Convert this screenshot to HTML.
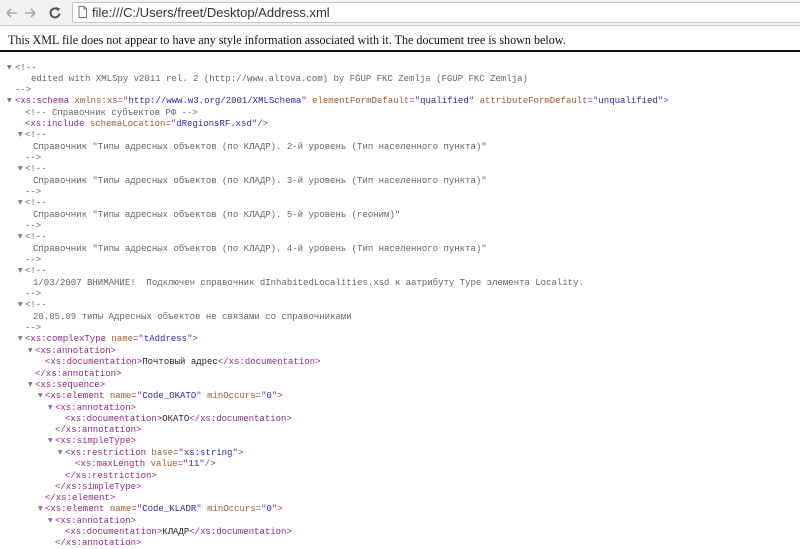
<!DOCTYPE html>
<html><head><meta charset="utf-8"><style>
body{margin:0;width:800px;height:542px;overflow:hidden;background:#fff;position:relative;font-family:"Liberation Sans",sans-serif}
.bar{position:absolute;left:0;top:0;width:800px;height:25px;background:#f1f1f1;border-bottom:1px solid #c8c8c8}
.addr{position:absolute;left:72px;top:2px;width:730px;height:19px;background:#fff;border:1px solid #c6c6c6;border-radius:2px}
.addr span{position:absolute;left:19px;top:2px;font-size:13px;color:#333}
.banner{position:absolute;left:8px;top:33px;font-family:"Liberation Serif",serif;font-size:12.1px;color:#111}
.rule{position:absolute;left:0;top:50px;width:800px;height:2px;background:#111}
.l{position:absolute;font-family:"Liberation Mono","DejaVu Sans Mono",monospace;font-size:9px;line-height:11px;white-space:pre;color:#8a2b85}
.t{position:absolute;font-size:6px;color:#777;font-family:"DejaVu Sans",sans-serif}
.c{color:#5d6a5d}.a{color:#a05a2a}.v{color:#2a2aa0}.x{color:#222}
</style></head><body>
<div class="bar">
<svg style="position:absolute;left:5px;top:6px" width="60" height="14" viewBox="0 0 60 14">
<path d="M2 7h10M2 7l4-4M2 7l4 4" stroke="#aaa" stroke-width="1.6" fill="none"/>
<path d="M20 7h10M30 7l-4-4M30 7l-4 4" stroke="#aaa" stroke-width="1.6" fill="none"/>
<path d="M53 3.5a4.5 4.5 0 1 0 1.5 4" stroke="#555" stroke-width="2" fill="none"/><path d="M51 1l4 1.5-2 3z" fill="#555"/>
</svg>
<div class="addr"><svg style="position:absolute;left:5px;top:3px" width="9" height="12"><path d="M1 .5h5l2.5 2.5v8.5h-7.5z M6 .5v2.5h2.5" stroke="#777" fill="none"/></svg><span>file:///C:/Users/freet/Desktop/Address.xml</span></div>
</div>
<div class="banner">This XML file does not appear to have any style information associated with it. The document tree is shown below.</div>
<div class="rule"></div>

<span class="t" style="left:7px;top:64px">▼</span><div class="l c" style="left:15px;top:63px">&lt;!--</div>
<div class="l c" style="left:31px;top:74px">edited with XMLSpy v2011 rel. 2 (http://www.altova.com) by FGUP FKC Zemlja (FGUP FKC Zemlja)</div>
<div class="l c" style="left:15px;top:85px">--&gt;</div>
<span class="t" style="left:7px;top:97px">▼</span><div class="l" style="left:15px;top:96px">&lt;xs:schema <span class="a">xmlns:xs</span>="<span class="v">http://www.w3.org/2001/XMLSchema</span>" <span class="a">elementFormDefault</span>="<span class="v">qualified</span>" <span class="a">attributeFormDefault</span>="<span class="v">unqualified</span>"&gt;</div>
<div class="l c" style="left:25px;top:108px">&lt;!-- Справочник субъектов РФ --&gt;</div>
<div class="l" style="left:25px;top:119px">&lt;xs:include <span class="a">schemaLocation</span>="<span class="v">dRegionsRF.xsd</span>"/&gt;</div>

<span class="t" style="left:18px;top:131px">▼</span><div class="l c" style="left:25px;top:130px">&lt;!--</div>
<div class="l c" style="left:33px;top:142px">Справочник "Типы адресных объектов (по КЛАДР). 2-й уровень (Тип населенного пункта)"</div>
<div class="l c" style="left:25px;top:153px">--&gt;</div>
<span class="t" style="left:18px;top:165px">▼</span><div class="l c" style="left:25px;top:164px">&lt;!--</div>
<div class="l c" style="left:33px;top:176px">Справочник "Типы адресных объектов (по КЛАДР). 3-й уровень (Тип населенного пункта)"</div>
<div class="l c" style="left:25px;top:187px">--&gt;</div>
<span class="t" style="left:18px;top:199px">▼</span><div class="l c" style="left:25px;top:198px">&lt;!--</div>
<div class="l c" style="left:33px;top:210px">Справочник "Типы адресных объектов (по КЛАДР). 5-й уровень (геоним)"</div>
<div class="l c" style="left:25px;top:221px">--&gt;</div>
<span class="t" style="left:18px;top:233px">▼</span><div class="l c" style="left:25px;top:232px">&lt;!--</div>
<div class="l c" style="left:33px;top:244px">Справочник "Типы адресных объектов (по КЛАДР). 4-й уровень (Тип населенного пункта)"</div>
<div class="l c" style="left:25px;top:255px">--&gt;</div>
<span class="t" style="left:18px;top:267px">▼</span><div class="l c" style="left:25px;top:266px">&lt;!--</div>
<div class="l c" style="left:33px;top:278px">1/03/2007 ВНИМАНИЕ!  Подключен справочник dInhabitedLocalities.xsd к аатрибуту Type элемента Locality.</div>
<div class="l c" style="left:25px;top:289px">--&gt;</div>
<span class="t" style="left:18px;top:301px">▼</span><div class="l c" style="left:25px;top:300px">&lt;!--</div>
<div class="l c" style="left:33px;top:312px">20.05.09 типы Адресных объектов не связами со справочниками</div>
<div class="l c" style="left:25px;top:323px">--&gt;</div>

<span class="t" style="left:18px;top:335px">▼</span><div class="l" style="left:25px;top:334px">&lt;xs:complexType <span class="a">name</span>="<span class="v">tAddress</span>"&gt;</div>
<span class="t" style="left:28px;top:347px">▼</span><div class="l" style="left:35px;top:346px">&lt;xs:annotation&gt;</div>
<div class="l" style="left:45px;top:357px">&lt;xs:documentation&gt;<span class="x">Почтовый адрес</span>&lt;/xs:documentation&gt;</div>
<div class="l" style="left:35px;top:369px">&lt;/xs:annotation&gt;</div>
<span class="t" style="left:28px;top:381px">▼</span><div class="l" style="left:35px;top:380px">&lt;xs:sequence&gt;</div>
<span class="t" style="left:38px;top:392px">▼</span><div class="l" style="left:45px;top:391px">&lt;xs:element <span class="a">name</span>="<span class="v">Code_OKATO</span>" <span class="a">minOccurs</span>="<span class="v">0</span>"&gt;</div>
<span class="t" style="left:48px;top:404px">▼</span><div class="l" style="left:55px;top:403px">&lt;xs:annotation&gt;</div>
<div class="l" style="left:65px;top:414px">&lt;xs:documentation&gt;<span class="x">ОКАТО</span>&lt;/xs:documentation&gt;</div>
<div class="l" style="left:55px;top:425px">&lt;/xs:annotation&gt;</div>
<span class="t" style="left:48px;top:437px">▼</span><div class="l" style="left:55px;top:436px">&lt;xs:simpleType&gt;</div>
<span class="t" style="left:58px;top:449px">▼</span><div class="l" style="left:65px;top:448px">&lt;xs:restriction <span class="a">base</span>="<span class="v">xs:string</span>"&gt;</div>
<div class="l" style="left:75px;top:459px">&lt;xs:maxLength <span class="a">value</span>="<span class="v">11</span>"/&gt;</div>
<div class="l" style="left:65px;top:471px">&lt;/xs:restriction&gt;</div>
<div class="l" style="left:55px;top:482px">&lt;/xs:simpleType&gt;</div>
<div class="l" style="left:45px;top:493px">&lt;/xs:element&gt;</div>
<span class="t" style="left:38px;top:505px">▼</span><div class="l" style="left:45px;top:504px">&lt;xs:element <span class="a">name</span>="<span class="v">Code_KLADR</span>" <span class="a">minOccurs</span>="<span class="v">0</span>"&gt;</div>
<span class="t" style="left:48px;top:517px">▼</span><div class="l" style="left:55px;top:516px">&lt;xs:annotation&gt;</div>
<div class="l" style="left:65px;top:527px">&lt;xs:documentation&gt;<span class="x">КЛАДР</span>&lt;/xs:documentation&gt;</div>
<div class="l" style="left:55px;top:538px">&lt;/xs:annotation&gt;</div>
</body></html>
